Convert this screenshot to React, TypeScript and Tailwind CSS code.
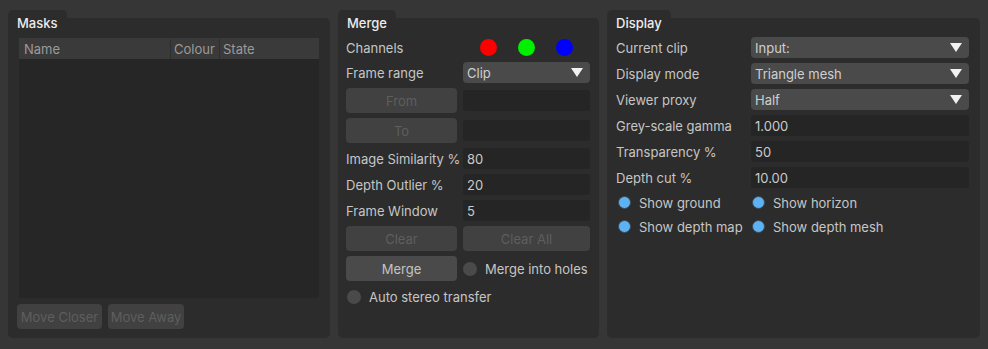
import React from "react";

type PanelProps = {
  title: string;
  className: string;
  bodyClass: string;
  children: React.ReactNode;
};

const Panel = ({ title, className, bodyClass, children }: PanelProps) => (
  <div className={`flex flex-col ${className}`}>
    <div className="relative z-10 self-start rounded-t-[5px] bg-[#2c2c2c] px-[9px] pb-[3px] pt-[5px] text-[13px] leading-[16px] font-medium text-[#ececec]">
      {title}
    </div>
    <div
      className={`-mt-[16px] flex-1 rounded-[5px] rounded-tl-none bg-[#2c2c2c] ${bodyClass}`}
    >
      {children}
    </div>
  </div>
);

const Label = ({ children }: { children: React.ReactNode }) => (
  <div className="flex items-center whitespace-nowrap pt-[1px] text-[13px] text-[#c6c6c6]">
    {children}
  </div>
);

const Arrow = () => (
  <svg width="12" height="9" viewBox="0 0 12 9">
    <polygon points="0,0 12,0 6,9" fill="#f2f2f2" />
  </svg>
);

const Dropdown = ({ value }: { value: string }) => (
  <div className="flex h-[21px] items-center justify-between rounded-[4px] bg-[#4a4a4a] pl-[4px] pr-[7px] text-[13px] text-[#cfcfcf]">
    <span className="pt-[1px]">{value}</span>
    <Arrow />
  </div>
);

const Field = ({ value }: { value?: string }) => (
  <div className="flex h-[21px] items-center rounded-[3px] bg-[#252525] pl-[4px] pt-[1px] text-[13px] text-[#cacaca]">
    {value}
  </div>
);

const Button = ({ text, disabled }: { text: string; disabled?: boolean }) => (
  <div
    className={`flex h-[25px] items-center justify-center rounded-[4px] pt-[1px] text-[13px] ${
      disabled ? "bg-[#414141] text-[#5e5e5e]" : "bg-[#4a4a4a] text-[#c4c4c4]"
    }`}
  >
    {text}
  </div>
);

const GreyRadio = ({ text }: { text: string }) => (
  <div className="flex h-[21px] items-center gap-[8px] text-[13px] text-[#c6c6c6]">
    <span className="h-[14px] w-[14px] rounded-full bg-[#4a4a4a]" />
    <span className="pt-[1px]">{text}</span>
  </div>
);

const BlueRadio = ({ text }: { text: string }) => (
  <div className="flex h-[20px] items-center gap-[8px] pl-[2px] text-[13px] text-[#c6c6c6]">
    <span className="h-[13px] w-[13px] rounded-full border border-[#3a4a58] bg-[#5cb2f2]" />
    <span className="pt-[1px]">{text}</span>
  </div>
);

export default function App() {
  return (
    <div className="flex h-[349px] w-[988px] gap-[8px] bg-[#363636] pb-[11px] pl-[8px] pt-[10px] font-['Inter','Liberation_Sans',sans-serif] leading-[16px]">
      <Panel
        title="Masks"
        className="w-[322px]"
        bodyClass="flex flex-col px-[9px] pb-[9px] pt-[20px]"
      >
        <div className="mx-[2px] flex flex-1 flex-col bg-[#262626]">
          <div className="flex h-[21px] bg-[#3a3a3a] pt-[1px] text-[13px] text-[#9b9b9b]">
            <div className="flex w-[151px] items-center pl-[5px]">Name</div>
            <div className="flex w-[49px] items-center border-l border-[#2e2e2e] pl-[3px]">
              Colour
            </div>
            <div className="flex flex-1 items-center border-l border-[#2e2e2e] pl-[3px]">
              State
            </div>
          </div>
        </div>
        <div className="mt-[6px] flex gap-[6px]">
          <div className="w-[85px]">
            <Button text="Move Closer" disabled />
          </div>
          <div className="w-[76px]">
            <Button text="Move Away" disabled />
          </div>
        </div>
      </Panel>

      <Panel
        title="Merge"
        className="w-[261px]"
        bodyClass="px-[8px] pt-[19px]"
      >
        <div className="grid grid-cols-[111px_127px] gap-x-[6px] gap-y-[5px]">
          <div className="flex h-[20px]">
            <Label>Channels</Label>
          </div>
          <div className="flex h-[20px] items-center gap-[21px] pl-[17px]">
            <span className="h-[17px] w-[17px] rounded-full bg-[#ff0000]" />
            <span className="h-[17px] w-[17px] rounded-full bg-[#00f000]" />
            <span className="h-[17px] w-[17px] rounded-full bg-[#0000ff]" />
          </div>

          <Label>Frame range</Label>
          <Dropdown value="Clip" />

          <Button text="From" disabled />
          <div className="self-center">
            <Field />
          </div>

          <Button text="To" disabled />
          <div className="self-center">
            <Field />
          </div>

          <Label>Image Similarity %</Label>
          <Field value="80" />

          <Label>Depth Outlier %</Label>
          <Field value="20" />

          <Label>Frame Window</Label>
          <Field value="5" />

          <Button text="Clear" disabled />
          <Button text="Clear All" disabled />

          <Button text="Merge" />
          <div className="flex items-center">
            <GreyRadio text="Merge into holes" />
          </div>

          <div className="col-span-2 pl-[1px]">
            <GreyRadio text="Auto stereo transfer" />
          </div>
        </div>
      </Panel>

      <Panel
        title="Display"
        className="w-[373px]"
        bodyClass="pl-[9px] pr-[11px] pt-[19px]"
      >
        <div className="grid grid-cols-[129px_1fr] gap-x-[6px] gap-y-[5px]">
          <Label>Current clip</Label>
          <Dropdown value="Input:" />
          <Label>Display mode</Label>
          <Dropdown value="Triangle mesh" />
          <Label>Viewer proxy</Label>
          <Dropdown value="Half" />
          <Label>Grey-scale gamma</Label>
          <Field value="1.000" />
          <Label>Transparency %</Label>
          <Field value="50" />
          <Label>Depth cut %</Label>
          <Field value="10.00" />
        </div>
        <div className="mt-[4px] grid grid-cols-[129px_1fr] gap-x-[5px] gap-y-[4px]">
          <BlueRadio text="Show ground" />
          <BlueRadio text="Show horizon" />
          <BlueRadio text="Show depth map" />
          <BlueRadio text="Show depth mesh" />
        </div>
      </Panel>
    </div>
  );
}
